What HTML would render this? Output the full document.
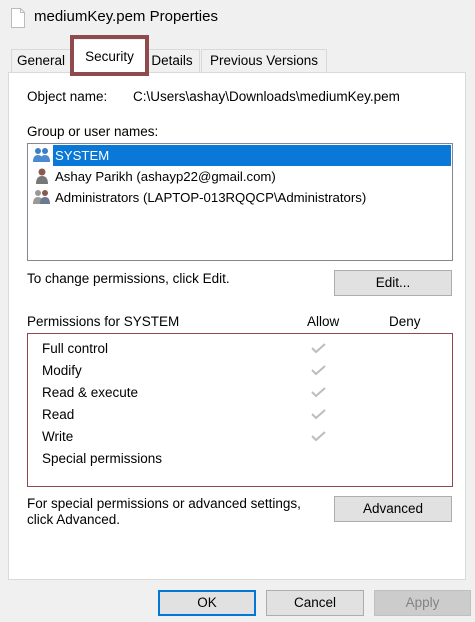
<!DOCTYPE html>
<html><head><style>
body{margin:0;width:475px;height:622px;background:#f0f0f0;font-family:"Liberation Sans",sans-serif;font-size:13.5px;color:#000;position:relative;overflow:hidden}
.a{position:absolute;white-space:nowrap}
.li{font-size:13.2px}
.tab{position:absolute;top:49px;height:23px;border:1px solid #d9d9d9;border-bottom:none;background:#f0f0f0;box-sizing:border-box;text-align:center;line-height:22px;font-size:13.5px}
.btn{position:absolute;background:#e1e1e1;border:1px solid #adadad;box-sizing:border-box;text-align:center;font-size:13.5px}
.chk{position:absolute;left:311px}
</style></head><body>
<svg class="a" style="left:10px;top:7px" width="16" height="22"><path d="M1.5 1.5h9l4 4v15h-13z" fill="#fff" stroke="#bbb"/><path d="M10.5 1.5v4h4" fill="none" stroke="#bbb"/></svg>
<div class="a" style="left:34px;top:8px;font-size:15px">mediumKey.pem Properties</div>

<div class="a" style="left:8px;top:72px;width:458px;height:508px;background:#fff;border:1px solid #d9d9d9;box-sizing:border-box"></div>
<div class="tab" style="left:11px;width:60px">General</div>
<div class="tab" style="left:144px;width:56px">Details</div>
<div class="tab" style="left:201px;width:126px">Previous Versions</div>
<div class="tab" style="left:74px;top:40px;width:71px;height:33px;background:#fff;border:none;line-height:34px">Security</div>
<div class="a" style="left:70px;top:35px;width:79px;height:41px;border:4px solid #8e4a4c;box-sizing:border-box"></div>

<div class="a" style="left:27px;top:89px">Object name:</div>
<div class="a" style="left:133px;top:89px">C:\Users\ashay\Downloads\mediumKey.pem</div>
<div class="a" style="left:27px;top:124px">Group or user names:</div>
<div class="a" style="left:27px;top:143px;width:426px;height:118px;border:1px solid #828790;box-sizing:border-box;background:#fff"></div>
<div class="a" style="left:53px;top:145px;width:398px;height:21px;background:#0978d7"></div>
<svg class="a" style="left:33px;top:146px" width="18" height="18"><circle cx="5" cy="5" r="3" fill="#3c7fc5"/><circle cx="12" cy="5" r="3" fill="#3c7fc5"/><path d="M0 16q0-7 5-7q5 0 5 7zM7 16q0-7 5-7q5 0 5 7z" fill="#4a8ad0"/></svg>
<div class="a li" style="left:55px;top:148px;color:#fff">SYSTEM</div>
<svg class="a" style="left:34px;top:167px" width="16" height="18"><circle cx="8" cy="5" r="3.5" fill="#8a5a50"/><path d="M2 17q0-8 6-8q6 0 6 8z" fill="#777"/></svg>
<div class="a li" style="left:55px;top:169px">Ashay Parikh (ashayp22@gmail.com)</div>
<svg class="a" style="left:33px;top:188px" width="18" height="18"><circle cx="5" cy="5" r="3" fill="#999"/><circle cx="12" cy="5" r="3" fill="#8a5a50"/><path d="M0 16q0-7 5-7q5 0 5 7z" fill="#999"/><path d="M7 16q0-7 5-7q5 0 5 7z" fill="#6a7a90"/></svg>
<div class="a li" style="left:55px;top:190px">Administrators (LAPTOP-013RQQCP\Administrators)</div>

<div class="a" style="left:27px;top:271px">To change permissions, click Edit.</div>
<div class="btn" style="left:334px;top:270px;width:118px;height:26px;line-height:24px">Edit...</div>

<div class="a" style="left:27px;top:314px">Permissions for SYSTEM</div>
<div class="a" style="left:307px;top:314px">Allow</div>
<div class="a" style="left:389px;top:314px">Deny</div>
<div class="a" style="left:27px;top:333px;width:426px;height:154px;border:1px solid #8e4a4c;box-sizing:border-box"></div>
<div class="a" style="left:42px;top:341px">Full control</div>
<div class="a" style="left:42px;top:363px">Modify</div>
<div class="a" style="left:42px;top:385px">Read &amp; execute</div>
<div class="a" style="left:42px;top:407px">Read</div>
<div class="a" style="left:42px;top:429px">Write</div>
<div class="a" style="left:42px;top:451px">Special permissions</div>
<svg class="chk" style="top:342px" width="16" height="102"><g fill="none" stroke="#bdbdbd" stroke-width="2"><path d="M1 6l4 4 9-8"/><path d="M1 28l4 4 9-8"/><path d="M1 50l4 4 9-8"/><path d="M1 72l4 4 9-8"/><path d="M1 94l4 4 9-8"/></g></svg>

<div class="a" style="left:27px;top:496px;line-height:16px">For special permissions or advanced settings,<br>click Advanced.</div>
<div class="btn" style="left:334px;top:496px;width:118px;height:26px;line-height:24px">Advanced</div>

<div class="btn" style="left:158px;top:590px;width:98px;height:26px;line-height:22px;border:2px solid #0078d7">OK</div>
<div class="btn" style="left:266px;top:590px;width:98px;height:26px;line-height:24px">Cancel</div>
<div class="btn" style="left:374px;top:590px;width:97px;height:26px;line-height:24px;background:#ccc;border-color:#bfbfbf;color:#838383">Apply</div>
</body></html>
